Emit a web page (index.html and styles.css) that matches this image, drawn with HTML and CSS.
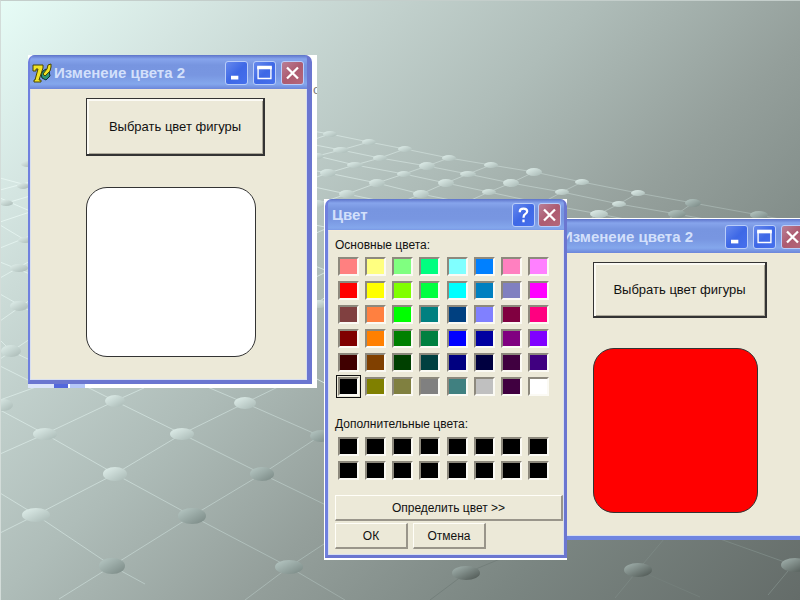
FILE: index.html
```html
<!DOCTYPE html>
<html lang="ru">
<head>
<meta charset="utf-8">
<title>Изменеие цвета 2</title>
<link rel="stylesheet" href="styles.css">
</head>
<body>
<main class="desktop">
  <svg class="wallpaper" viewBox="0 0 800 600" preserveAspectRatio="xMidYMid slice" aria-hidden="true">
    <defs>
      <linearGradient id="node" x1="0" y1="0" x2="1" y2="1"><stop offset="0.1" stop-color="#dcebe7"/><stop offset="0.9" stop-color="#adbdb9"/></linearGradient>
      <linearGradient id="nodeMid" x1="0" y1="0" x2="1" y2="1"><stop offset="0.1" stop-color="#b2c3bf"/><stop offset="0.9" stop-color="#7e8d89"/></linearGradient>
      <linearGradient id="nodeDark" x1="0" y1="0" x2="1" y2="1"><stop offset="0.1" stop-color="#9daca8"/><stop offset="0.9" stop-color="#535c58"/></linearGradient>
      <linearGradient id="wire" gradientUnits="userSpaceOnUse" x1="0" y1="200" x2="400" y2="600"><stop offset="0" stop-color="#e6f5f1"/><stop offset="0.5" stop-color="#c8d8d4"/><stop offset="0.8" stop-color="#a9b8b4"/><stop offset="1" stop-color="#96a29e"/></linearGradient>
      <linearGradient id="wireFar" gradientUnits="userSpaceOnUse" x1="320" y1="0" x2="800" y2="0"><stop offset="0" stop-color="#d3e2de"/><stop offset="1" stop-color="#98a5a1"/></linearGradient>
    </defs>
    <g fill="none" stroke="url(#wireFar)">
      <path d="M300 129 330 134 369 142 405 149 449 158 491 165 534 172 582 182 638 193 693 203 759 215 800 223"/>
      <path d="M300 142 341 150 380 158 427 166 468 174 511 183 562 192 619 204 677 214 710 220"/>
      <path d="M300 152 317 156 355 165 404 174 446 183 489 192 540 203 599 214 640 222"/>
      <path d="M300 168 328 173 377 183 421 194 480 206M300 184 347 194 400 205"/>
      <path d="M330 134 300 144M369 142 341 150 317 156 300 162M405 149 380 158 355 165 328 173 300 183M449 158 427 166 404 174 377 183 347 194 317 204"/>
      <path d="M491 165 468 174 446 183 421 194 395 205M534 172 511 183 489 192 460 205M582 182 562 192 540 204M638 193 619 204 599 214 585 222M693 203 677 214 665 221"/>
      <path d="M300 222 330 228M300 240 330 227M300 260 330 272M300 285 330 270M300 298 330 308M300 315 330 294M300 370 330 386"/>
    </g>
    <g fill="none" stroke="url(#wire)">
      <path d="M0 178 30 186M0 190 30 182M0 205 30 196M0 198 30 211M0 222 30 212M0 225 30 243M0 248 30 236M0 262 30 274M0 278 30 261M0 294 30 311M0 321 30 300M0 340 11 351 30 360M0 359 30 339M0 366 30 381"/>
      <path d="M0 410 45 434 115 474 192 516 289 567 345 600M85 386 115 401 182 434 262 474 330 507M205 386 245 403 320 436M0 493 36 515 112 566 145 584"/>
      <path d="M0 454 45 434 115 401 144 388M0 533 36 515 115 474 182 434 245 403 280 386M59 599 112 566 192 516 262 474 320 436M0 400 36 387M245 600 289 567 330 540"/>
    </g>
    <path d="M664 539 638 570 615 598M720 539 793 565 768 595" fill="none" stroke="#7b8783"/>
    <path d="M505 557 466 573 430 600M638 570 700 597" fill="none" stroke="#747f7b"/>
    <g fill="url(#node)">
      <ellipse cx="330" cy="134" rx="7" ry="3"/><ellipse cx="369" cy="142" rx="7" ry="3"/><ellipse cx="405" cy="149" rx="7" ry="3"/><ellipse cx="449" cy="158" rx="7" ry="3"/><ellipse cx="491" cy="165" rx="7" ry="3"/><ellipse cx="534" cy="172" rx="8" ry="4"/><ellipse cx="582" cy="182" rx="7" ry="3"/><ellipse cx="638" cy="193" rx="7" ry="3"/>
      <ellipse cx="341" cy="150" rx="8" ry="3"/><ellipse cx="380" cy="158" rx="7" ry="3"/><ellipse cx="427" cy="166" rx="8" ry="4"/><ellipse cx="468" cy="174" rx="8" ry="3"/><ellipse cx="511" cy="183" rx="8" ry="4"/><ellipse cx="562" cy="192" rx="7" ry="3"/><ellipse cx="619" cy="204" rx="7" ry="3"/>
      <ellipse cx="317" cy="156" rx="7" ry="3"/><ellipse cx="355" cy="165" rx="8" ry="3"/><ellipse cx="404" cy="174" rx="7" ry="3"/><ellipse cx="446" cy="183" rx="8" ry="4"/><ellipse cx="489" cy="192" rx="7" ry="3"/><ellipse cx="599" cy="214" rx="9" ry="4"/>
      <ellipse cx="328" cy="173" rx="8" ry="4"/><ellipse cx="377" cy="183" rx="8" ry="4"/><ellipse cx="421" cy="194" rx="8" ry="4"/><ellipse cx="347" cy="194" rx="8" ry="4"/><ellipse cx="317" cy="204" rx="8" ry="4"/><ellipse cx="319" cy="304" rx="9" ry="4"/>
      <ellipse cx="27" cy="164" rx="6" ry="3"/><ellipse cx="23" cy="186" rx="6" ry="3"/><ellipse cx="6" cy="203" rx="7" ry="3"/><ellipse cx="25" cy="240" rx="7" ry="3"/><ellipse cx="19" cy="268" rx="9" ry="4"/><ellipse cx="19" cy="306" rx="9" ry="5"/><ellipse cx="11" cy="351" rx="10" ry="6"/>
      <ellipse cx="3" cy="405" rx="10" ry="6"/><ellipse cx="115" cy="401" rx="10" ry="6"/><ellipse cx="245" cy="403" rx="11" ry="6"/><ellipse cx="45" cy="434" rx="12" ry="6"/><ellipse cx="182" cy="434" rx="12" ry="6"/><ellipse cx="115" cy="474" rx="12" ry="7"/><ellipse cx="36" cy="515" rx="14" ry="7"/>
    </g>
    <g fill="url(#nodeMid)"><ellipse cx="693" cy="203" rx="8" ry="4"/><ellipse cx="677" cy="214" rx="9" ry="4"/><ellipse cx="759" cy="215" rx="9" ry="4"/><ellipse cx="321" cy="436" rx="11" ry="6"/><ellipse cx="262" cy="474" rx="12" ry="7"/><ellipse cx="192" cy="516" rx="14" ry="8"/><ellipse cx="112" cy="566" rx="13" ry="8"/><ellipse cx="289" cy="567" rx="14" ry="7"/></g>
    <g fill="url(#nodeDark)"><ellipse cx="466" cy="573" rx="14" ry="7"/><ellipse cx="638" cy="570" rx="14" ry="7"/><ellipse cx="795" cy="565" rx="14" ry="7"/></g>
  </svg>

  <div class="capture capture-first">
    <section class="window">
      <header class="titlebar">
        <svg class="app-icon" viewBox="0 0 20 20" aria-hidden="true">
          <path d="M11 8 14 6 17 8 18 13 14 17 10 15 9 11z" fill="#2f9474" stroke="#0a3130"/>
          <path d="M1 2H11V5L7 17H9V19H2V17H3L6 6H4V8H1z" fill="#f1e426" stroke="#4b4700"/>
          <path d="M11 11 15 6 16 2 19 1V4L18 8 13 13z" fill="#f1e426" stroke="#4b4700"/>
        </svg>
        <h1 class="title">Изменеие цвета 2</h1>
        <button class="caption" aria-label="Свернуть"><svg viewBox="0 0 22 24"><path d="M5 17h8" stroke="#fff" stroke-width="4"/></svg></button>
        <button class="caption" aria-label="Развернуть"><svg viewBox="0 0 22 24"><path d="M4 6h14v12H4z" fill="none" stroke="#fff" stroke-width="1.5"/><path d="M3 6h16" stroke="#fff" stroke-width="4"/></svg></button>
        <button class="caption close" aria-label="Закрыть"><svg viewBox="0 0 22 24"><path d="M5 6 17 18M17 6 5 18" stroke="#fff" stroke-width="2.5"/></svg></button>
      </header>
      <div class="client">
        <button class="choose">Выбрать цвет фигуры</button>
        <div class="shape"></div>
      </div>
    </section>
    <span class="stray">о</span>
    <span class="scrap"></span>
  </div>

  <section class="window window-second">
    <header class="titlebar">
      <span class="app-icon"></span>
      <h1 class="title">Изменеие цвета 2</h1>
      <button class="caption" aria-label="Свернуть"><svg viewBox="0 0 22 24"><path d="M5 17h8" stroke="#fff" stroke-width="4"/></svg></button>
      <button class="caption" aria-label="Развернуть"><svg viewBox="0 0 22 24"><path d="M4 6h14v12H4z" fill="none" stroke="#fff" stroke-width="1.5"/><path d="M3 6h16" stroke="#fff" stroke-width="4"/></svg></button>
      <button class="caption close" aria-label="Закрыть"><svg viewBox="0 0 22 24"><path d="M5 6 17 18M17 6 5 18" stroke="#fff" stroke-width="2.5"/></svg></button>
    </header>
    <div class="client">
      <button class="choose">Выбрать цвет фигуры</button>
      <div class="shape shape-red"></div>
    </div>
  </section>

  <div class="capture capture-dialog">
    <section class="window dialog" role="dialog" aria-labelledby="dialog-title">
      <header class="titlebar">
        <h1 class="title" id="dialog-title">Цвет</h1>
        <button class="caption" aria-label="Справка"><svg viewBox="0 0 22 24"><path d="M7 9V8q0-3 4-3t4 3q0 2-2 3t-2 4M11 17v3" fill="none" stroke="#fff" stroke-width="2.5"/></svg></button>
        <button class="caption close" aria-label="Закрыть"><svg viewBox="0 0 22 24"><path d="M5 6 17 18M17 6 5 18" stroke="#fff" stroke-width="2.5"/></svg></button>
      </header>
      <div class="client palette">
        <h2 class="label">Основные цвета:</h2>
        <div class="swatches" id="basic"></div>
        <h2 class="label label-custom">Дополнительные цвета:</h2>
        <div class="swatches" id="custom"></div>
        <button class="push define">Определить цвет &gt;&gt;</button>
        <div class="actions">
          <button class="push">ОК</button>
          <button class="push">Отмена</button>
        </div>
      </div>
    </section>
  </div>
</main>
<script src="script.js"></script>
</body>
</html>
```

FILE: styles.css
```css
* { box-sizing: border-box; }

body {
  margin: 0;
  font: 13px/16px "Liberation Sans", Arial, sans-serif;
  color: #111;
}

h1, h2 { margin: 0; font-size: inherit; font-weight: normal; }

button { font: inherit; color: inherit; padding: 0; border-radius: 0; }

.desktop {
  position: relative;
  min-height: 100vh;
  overflow: hidden;
  border-top: 1px solid #c4cecb;
  border-left: 1px solid #d3dcd9;
  background: linear-gradient(135deg, #e6fcf6 0%, #d5e6e2 14%, #c1d0cc 29%, #aebcb8 43%, #949f9b 60%, #7b8682 78%, #646c69 100%);
}

.wallpaper { position: absolute; top: -1px; left: -1px; width: calc(100% + 1px); height: calc(100% + 1px); }

.capture { position: absolute; background: #fff; }
.capture-first { left: 27px; top: 54px; width: 289px; padding: 0 5px 4px 0; }
.capture-dialog { left: 323px; top: 198px; width: 243px; padding: 0 0 2px 1px; }

.stray { position: absolute; top: 27px; right: 0; width: 4px; overflow: hidden; color: #777; }

.scrap {
  position: absolute;
  bottom: 0;
  left: 0;
  width: 60px;
  height: 4px;
  background: linear-gradient(90deg, #dce5fa 26px, #5468dc 26px 40px, #fff 40px 42px, #b5c7f8 42px 57px, #fff 57px);
}

.window {
  position: relative;
  display: flex;
  flex-direction: column;
  border: solid #6f80de;
  border-width: 0 5px 4px 2px;
  border-right-color: #6b76d0;
  border-bottom-color: #6b76d0;
  border-radius: 7px 7px 0 0;
  background: #7b98e2;
  overflow: hidden;
}

.window-second {
  position: absolute;
  left: 535px;
  top: 217px;
  width: 276px;
  border-top: 1px solid #fff;
  border-bottom-color: #6f85e0;
  border-radius: 0;
}

.titlebar {
  display: flex;
  align-items: center;
  gap: 5px;
  height: 34px;
  margin: 0 -5px 0 -2px;
  padding: 2px 8px 0 4px;
  background: linear-gradient(#5d73c9 0, #86a4ec 4px, #7795e0 10px, #7896e1 20px, #84a7ec 29px, #6c86da 34px);
}

.app-icon { flex: none; width: 20px; height: 20px; margin-right: -3px; }

.title { flex: 1; font-size: 15px; font-weight: bold; color: #d3e0fb; white-space: nowrap; }

.caption {
  flex: none;
  width: 23px;
  height: 24px;
  border: 1px solid #b9cdfa;
  border-radius: 3px;
  background: linear-gradient(135deg, #6689ed, #3e68e6 50%, #4670ed);
}
.caption svg { display: block; width: 21px; height: 22px; }
.close { background: linear-gradient(135deg, #b97f96, #ad5b70 50%, #b5677a); }

.client {
  border: 1px solid #d8dff0;
  border-top-color: #f3ead6;
  background: #ece9d8;
  padding: 8px 41px 22px 55px;
}

.choose {
  display: block;
  width: 100%;
  height: 58px;
  border: solid #333;
  border-width: 1px 2px 2px 1px;
  background: #ece9d8;
  box-shadow: inset 1px 1px 0 1px #fbfaf4, inset -1px -1px #aca899;
}

.shape {
  width: 170px;
  aspect-ratio: 1;
  margin-top: 31px;
  border: 1px solid #333;
  border-radius: 21px;
  background: #fff;
}

.window-second .client { padding: 8px 39px 22px 54px; }
.window-second .choose { height: 56px; }
.window-second .shape { width: 165px; margin-top: 30px; }
.window-second .shape-red { background: #f00; }

.dialog { border-width: 0 3px 3px 3px; font-size: 12px; }
.dialog .titlebar { height: 31px; margin: 0 -3px; padding: 1px 6px 0 7px; gap: 3px; }

.client.palette { display: flex; flex-direction: column; padding: 6px 0 5px 6px; }

.label { white-space: nowrap; }
.label-custom { margin-top: 20px; }

.swatches {
  display: grid;
  grid-template-columns: repeat(8, 21px);
  justify-content: space-between;
  row-gap: 5px;
  margin: 4px 14px 0 3px;
}

.swatch {
  height: 19px;
  border: 2px solid;
  border-color: #8d897d #fbfaf4 #fbfaf4 #8d897d;
}
.swatch[aria-pressed="true"] { outline: 1px solid #111; outline-offset: 1px; }

#custom { margin-top: 5px; }

.push {
  height: 26px;
  border: solid;
  border-width: 1px 2px 2px 1px;
  border-color: #fffef8 #99958a #99958a #fffef8;
  background: #ece9d8;
}
.define { margin-top: 15px; }

.actions { display: flex; gap: 5px; margin-top: 2px; }
.actions .push { width: 73px; }
```

FILE: script.js
```js
const basic = `
ff8080 ffff80 80ff80 00ff80 80ffff 0080ff ff80c0 ff80ff
ff0000 ffff00 80ff00 00ff40 00ffff 0080c0 8080c0 ff00ff
804040 ff8040 00ff00 008080 004080 8080ff 800040 ff0080
800000 ff8000 008000 008040 0000ff 0000a0 800080 8000ff
400000 804000 004000 004040 000080 000040 400040 400080
000000 808000 808040 808080 408080 c0c0c0 400040 ffffff`.trim().split(/\s+/);

function fill(id, colors, selected) {
  const grid = document.getElementById(id);
  colors.forEach((color, i) => {
    const swatch = document.createElement("button");
    swatch.className = "swatch";
    swatch.style.backgroundColor = "#" + color;
    swatch.setAttribute("aria-label", "#" + color);
    swatch.setAttribute("aria-pressed", String(i === selected));
    grid.append(swatch);
  });
}

fill("basic", basic, 40);
fill("custom", Array(16).fill("000000"), -1);
```
